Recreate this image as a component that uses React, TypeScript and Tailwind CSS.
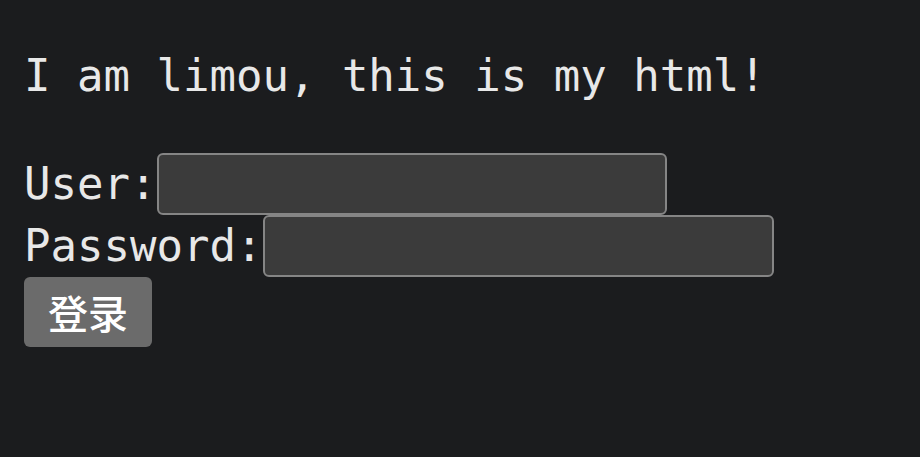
export default function App() {
  return (
    <div className="min-h-[457px] bg-[#1b1c1e] px-6 pt-12 text-[#e8e8e8] font-['DejaVu_Sans_Mono','Liberation_Mono',monospace] text-[44px]">
      <p className="h-14 leading-[56px]">I am limou, this is my html!</p>
      <form className="mt-12 flex flex-col items-start" onSubmit={(e) => e.preventDefault()}>
        <div className="flex h-[62px] items-center pt-px">
          <label className="leading-none">User:</label>
          <input
            type="text"
            className="ml-px h-[62px] w-[510px] rounded-[6px] border-2 border-[#858585] bg-[#3b3b3b] outline-none"
          />
        </div>
        <div className="flex h-[62px] items-center pt-px">
          <label className="leading-none">Password:</label>
          <input
            type="password"
            className="ml-px h-[62px] w-[511px] rounded-[6px] border-2 border-[#858585] bg-[#3b3b3b] outline-none"
          />
        </div>
        <button
          type="submit"
          className="mt-px flex h-[70px] w-[128px] items-center justify-center rounded-[6px] bg-[#6b6b6b] text-[40px] font-medium text-white font-['Noto_Sans_CJK_SC',sans-serif]"
        >
          登录
        </button>
      </form>
    </div>
  );
}
